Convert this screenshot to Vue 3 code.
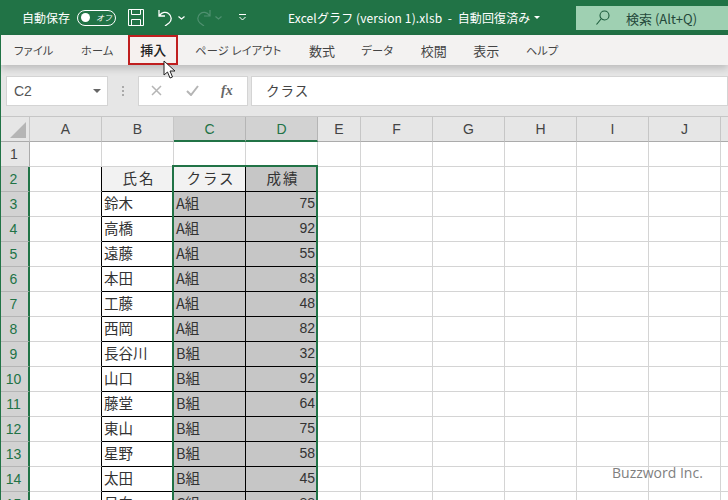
<template>
  <div class="app">
    <header class="titlebar">
      <span class="autosave">自動保存</span>
      <span class="toggle"><i class="knob"></i><em>オフ</em></span>
      <svg class="save" width="16" height="17" viewBox="0 0 16 17" fill="none" stroke="#fff" stroke-width="1">
        <path d="M.5.5h15v16H.5zM3.5.5v5h9v-5M3.5 16.5v-6h9v6" />
      </svg>
      <svg class="undo" width="15" height="17" viewBox="0 0 15 17" fill="none" stroke="#fff" stroke-width="1.3">
        <path d="M1 1v6h6M1.500 6.500C4 3 8 2.500 10.500 4.500c3.500 2.500 3.500 7 .5 9.500L7 17" />
      </svg>
      <svg class="chev" width="7" height="4" viewBox="0 0 7 4" fill="none" stroke="#fff" stroke-width="1.200"><path d="M.5.500l3 2.500 3-2.500" /></svg>
      <svg class="redo" width="15" height="17" viewBox="0 0 15 17" fill="none" stroke="#4f9070" stroke-width="1.200">
        <path d="M14 1v6H8M13.500 6.500C11 3 7 2.500 4.500 4.500c-3.500 2.500-3.500 7-.5 9.500L8 17" />
      </svg>
      <svg class="chev off" width="7" height="4" viewBox="0 0 7 4" fill="none" stroke="#4f9070" stroke-width="1.200"><path d="M.5.500l3 2.500 3-2.500" /></svg>
      <svg class="more" width="7" height="7" viewBox="0 0 7 7" fill="none" stroke="#fff"><path d="M0 .5h7M.5 3l3 3 3-3" /></svg>
      <span class="doc">Excelグラフ (version 1).xlsb&nbsp; -&nbsp; 自動回復済み</span>
      <svg class="caret" width="6" height="3" viewBox="0 0 6 3" fill="#fff"><path d="M0 0h6L3 3z" /></svg>
      <div class="search">
        <svg width="14" height="16" viewBox="0 0 14 16" fill="none" stroke="#1d5c3c" stroke-width="1.100">
          <circle cx="8.500" cy="5.500" r="4.500" /><path d="M5 9l-4.500 5.500" />
        </svg>
        <span>検索 (Alt+Q)</span>
      </div>
    </header>

    <nav class="tabs">
      <span
        v-for="t in tabs"
        :key="t"
        class="tab"
        :class="{ active: t === '挿入', kanji: /^[\u4e00-\u9fff]+$/.test(t) }"
      >{{ t }}</span>
      <svg class="cursor" width="14" height="20" viewBox="0 0 14 20">
        <path d="M1 1v14l3.500-3 2.500 6 2.500-1-2.500-6H12z" fill="#fff" stroke="#222" stroke-width="1" />
      </svg>
    </nav>

    <section class="formula">
      <div class="namebox"><span>C2</span><i class="arrow"></i></div>
      <span class="grip"></span>
      <div class="fbtns">
        <svg width="11" height="11" viewBox="0 0 11 11" stroke="#b5b5b5" stroke-width="1.500"><path d="M1 1l9 9M10 1l-9 9" /></svg>
        <svg width="13" height="11" viewBox="0 0 13 11" fill="none" stroke="#b5b5b5" stroke-width="2"><path d="M1 6l4 4 7-9" /></svg>
        <span class="fx">fx</span>
      </div>
      <div class="finput">クラス</div>
    </section>

    <section class="sheet">
      <div class="corner"><i></i></div>
      <div v-for="c in cols" :key="c" class="colhead" :class="{ sel: c === 'C' || c === 'D' }">{{ c }}</div>

      <template v-for="(r, i) in rows" :key="i">
        <div class="rowhead" :class="{ sel: i > 0 }">{{ i + 1 }}</div>
        <div class="cell" :class="{ edge: r }"></div>
        <div class="cell" :class="{ bx: r, head: i === 1, cap: i === 0 }">{{ r && r[0] }}</div>
        <div class="cell" :class="{ bx: r, head: i === 1, shade: i > 1, cap: i === 0 }">{{ r && r[1] }}</div>
        <div class="cell" :class="{ bx: r, shade: i >= 1, num: i > 1, title: i === 1, cap: i === 0 }">{{ r && r[2] }}</div>
        <div v-for="n in 7" :key="n" class="cell"></div>
      </template>

      <div class="selbox"></div>
      <span class="mark">Buzzword Inc.</span>
    </section>
  </div>
</template>

<script setup>
const tabs = ['ファイル', 'ホーム', '挿入', 'ページ レイアウト', '数式', 'データ', '校閲', '表示', 'ヘルプ']
const cols = ['A', 'B', 'C', 'D', 'E', 'F', 'G', 'H', 'I', 'J', '']
const rows = [
  null,
  ['氏名', 'クラス', '成績'],
  ['鈴木', 'A組', 75],
  ['高橋', 'A組', 92],
  ['遠藤', 'A組', 55],
  ['本田', 'A組', 83],
  ['工藤', 'A組', 48],
  ['西岡', 'A組', 82],
  ['長谷川', 'B組', 32],
  ['山口', 'B組', 92],
  ['藤堂', 'B組', 64],
  ['東山', 'B組', 75],
  ['星野', 'B組', 58],
  ['太田', 'B組', 45],
  ['日向', 'C組', 88]
]
</script>

<style>
html, body { margin: 0; overflow: hidden; background: #fff; }
</style>

<style scoped>
.app {
  position: relative;
  width: 728px;
  height: 500px;
  overflow: hidden;
  font-family: "Noto Sans CJK JP", "Liberation Sans", sans-serif;
  color: #333;
}
.app::after {
  content: "";
  position: absolute;
  left: 0;
  top: 35px;
  bottom: 0;
  width: 1px;
  background: #217346;
  z-index: 3;
}
.titlebar {
  height: 35px;
  background: #217346;
  display: flex;
  align-items: center;
  color: #fff;
  font-size: 12px;
  padding-left: 22px;
  box-sizing: border-box;
}
.autosave { width: 55px; }
.toggle {
  width: 31px;
  height: 14px;
  border: 1px solid #fff;
  border-radius: 8px;
  display: flex;
  align-items: center;
  padding: 0 3px;
}
.knob { width: 9px; height: 9px; border-radius: 50%; background: #fff; flex: none; }
.toggle em { font-size: 8px; margin-left: 6px; font-style: italic; white-space: nowrap; }
.save { margin-left: 12px; }
.undo { margin-left: 14px; }
.chev { margin-left: 5px; }
.redo { margin-left: 11px; }
.chev.off { margin-left: 4px; }
.more { margin-left: 17px; }
.doc { margin-left: 42px; white-space: nowrap; width: 246px; letter-spacing: 0.12px; }
.search {
  margin-left: auto;
  align-self: flex-start;
  margin-top: 6px;
  width: 152px;
  height: 24px;
  background: #9fd0b2;
  display: flex;
  align-items: center;
  padding-left: 20px;
  box-sizing: border-box;
  color: #24483a;
  font-size: 13px;
}
.search span { margin-left: 16px; white-space: nowrap; }

.tabs {
  height: 30px;
  background: #f3f2f1;
  display: flex;
  align-items: center;
  position: relative;
  font-size: 11.200px;
  letter-spacing: 0.2px;
  font-feature-settings: "palt";
  padding-left: 14px;
  box-shadow: 0 3px 8px rgba(0, 0, 0, 0.2);
  z-index: 1;
  color: #444;
}
.tab { margin-right: 27.500px; white-space: nowrap; }
.tab.kanji { font-size: 13px; letter-spacing: 0; margin-right: 26.500px; }
.tab.active {
  border: 2px solid #c01f1f;
  background: #f6f1ef;
  color: #222;
  font-weight: 500;
  margin: 0 17px 0 -13px;
  width: 50px;
  height: 30px;
  line-height: 26px;
  text-align: center;
  box-sizing: border-box;
}
.cursor { position: absolute; left: 163px; top: 25px; z-index: 2; }

.formula {
  height: 52px;
  background: #e6e6e6;
  display: flex;
  align-items: center;
  padding: 0 0 0 6px;
  box-sizing: border-box;
  border-bottom: 1px solid #c6c6c6;
}
.namebox {
  width: 102px;
  height: 30px;
  background: #fff;
  border: 1px solid #d4d4d4;
  box-sizing: border-box;
  display: flex;
  align-items: center;
  justify-content: space-between;
  padding: 0 6px 0 7px;
  font: 14px "Liberation Sans", sans-serif;
  color: #555;
}
.arrow { width: 0; height: 0; border: 4px solid transparent; border-top: 4px solid #666; border-bottom: 0; }
.grip {
  width: 2px;
  height: 10px;
  margin: 0 14px;
  background: repeating-linear-gradient(#aaa 0 2px, transparent 2px 4px);
}
.fbtns {
  width: 110px;
  height: 30px;
  background: #fff;
  border: 1px solid #d4d4d4;
  box-sizing: border-box;
  display: flex;
  align-items: center;
  gap: 24px;
  padding-left: 12px;
}
.fx { font: italic bold 14px "Liberation Serif", serif; color: #666; margin-left: -2px; }
.finput {
  flex: 1;
  height: 30px;
  margin-left: 3px;
  background: #fff;
  border: 1px solid #d4d4d4;
  box-sizing: border-box;
  padding-left: 14px;
  line-height: 26px;
  font-size: 13.500px;
  letter-spacing: 1px;
  color: #444;
}

.sheet {
  position: relative;
  display: grid;
  grid-template-columns: 30px 72px 72px 72px 72px 43px 72px 72px 72px 72px 72px 8px;
  grid-auto-rows: 25px;
  font: 14px "Liberation Sans", sans-serif;
  background: #fff;
}
.corner {
  background: #e6e6e6;
  border-right: 1px solid #c6c6c6;
  border-bottom: 1px solid #ababab;
  position: relative;
}
.corner i {
  position: absolute;
  right: 3px;
  bottom: 3px;
  border-style: solid;
  border-width: 0 0 16px 16px;
  border-color: transparent transparent #b5b5b5 transparent;
}
.colhead {
  background: #e6e6e6;
  border-right: 1px solid #c6c6c6;
  border-bottom: 1px solid #ababab;
  text-align: center;
  line-height: 24px;
  color: #444;
}
.colhead.sel {
  background: #d2d2d2;
  color: #217346;
  border-right-color: #b5b5b5;
  border-bottom: 2px solid #217346;
}
.rowhead {
  background: #e6e6e6;
  border-right: 1px solid #ababab;
  border-bottom: 1px solid #c6c6c6;
  text-align: center;
  line-height: 24px;
  color: #444;
  padding-right: 1px;
  box-sizing: border-box;
}
.rowhead.sel {
  background: #d2d2d2;
  color: #217346;
  border-right: 2px solid #217346;
  border-bottom-color: #b5b5b5;
}
.cell {
  border-right: 1px solid #d4d4d4;
  border-bottom: 1px solid #d4d4d4;
  box-sizing: border-box;
  font-family: "Noto Sans CJK JP", "Liberation Sans", sans-serif;
  font-size: 14.500px;
  line-height: 22px;
  padding: 0 2px;
  color: #333;
  white-space: nowrap;
  overflow: hidden;
}
.cell.edge { border-right-color: #000; }
.cell.bx { border-right-color: #000; border-bottom-color: #000; }
.cell.cap { border-right-color: #d4d4d4; }
.cell.head { background: #f2f2f2; text-align: center; letter-spacing: 2px; text-indent: 3px; }
.cell.shade { background: #c6c6c6; }
.cell.title { text-align: center; letter-spacing: 2px; text-indent: 3px; }
.cell.num { text-align: right; font-family: "Liberation Sans", sans-serif; font-size: 14px; line-height: 23px; padding-right: 2px; }
.selbox {
  position: absolute;
  left: 172px;
  top: 48px;
  width: 146px;
  height: 340px;
  border: 2px solid #217346;
  box-sizing: border-box;
  pointer-events: none;
}
.mark {
  position: absolute;
  left: 612px;
  top: 346px;
  font: 500 14px "Open Sans", sans-serif;
  color: #7f7f7f;
}
</style>
